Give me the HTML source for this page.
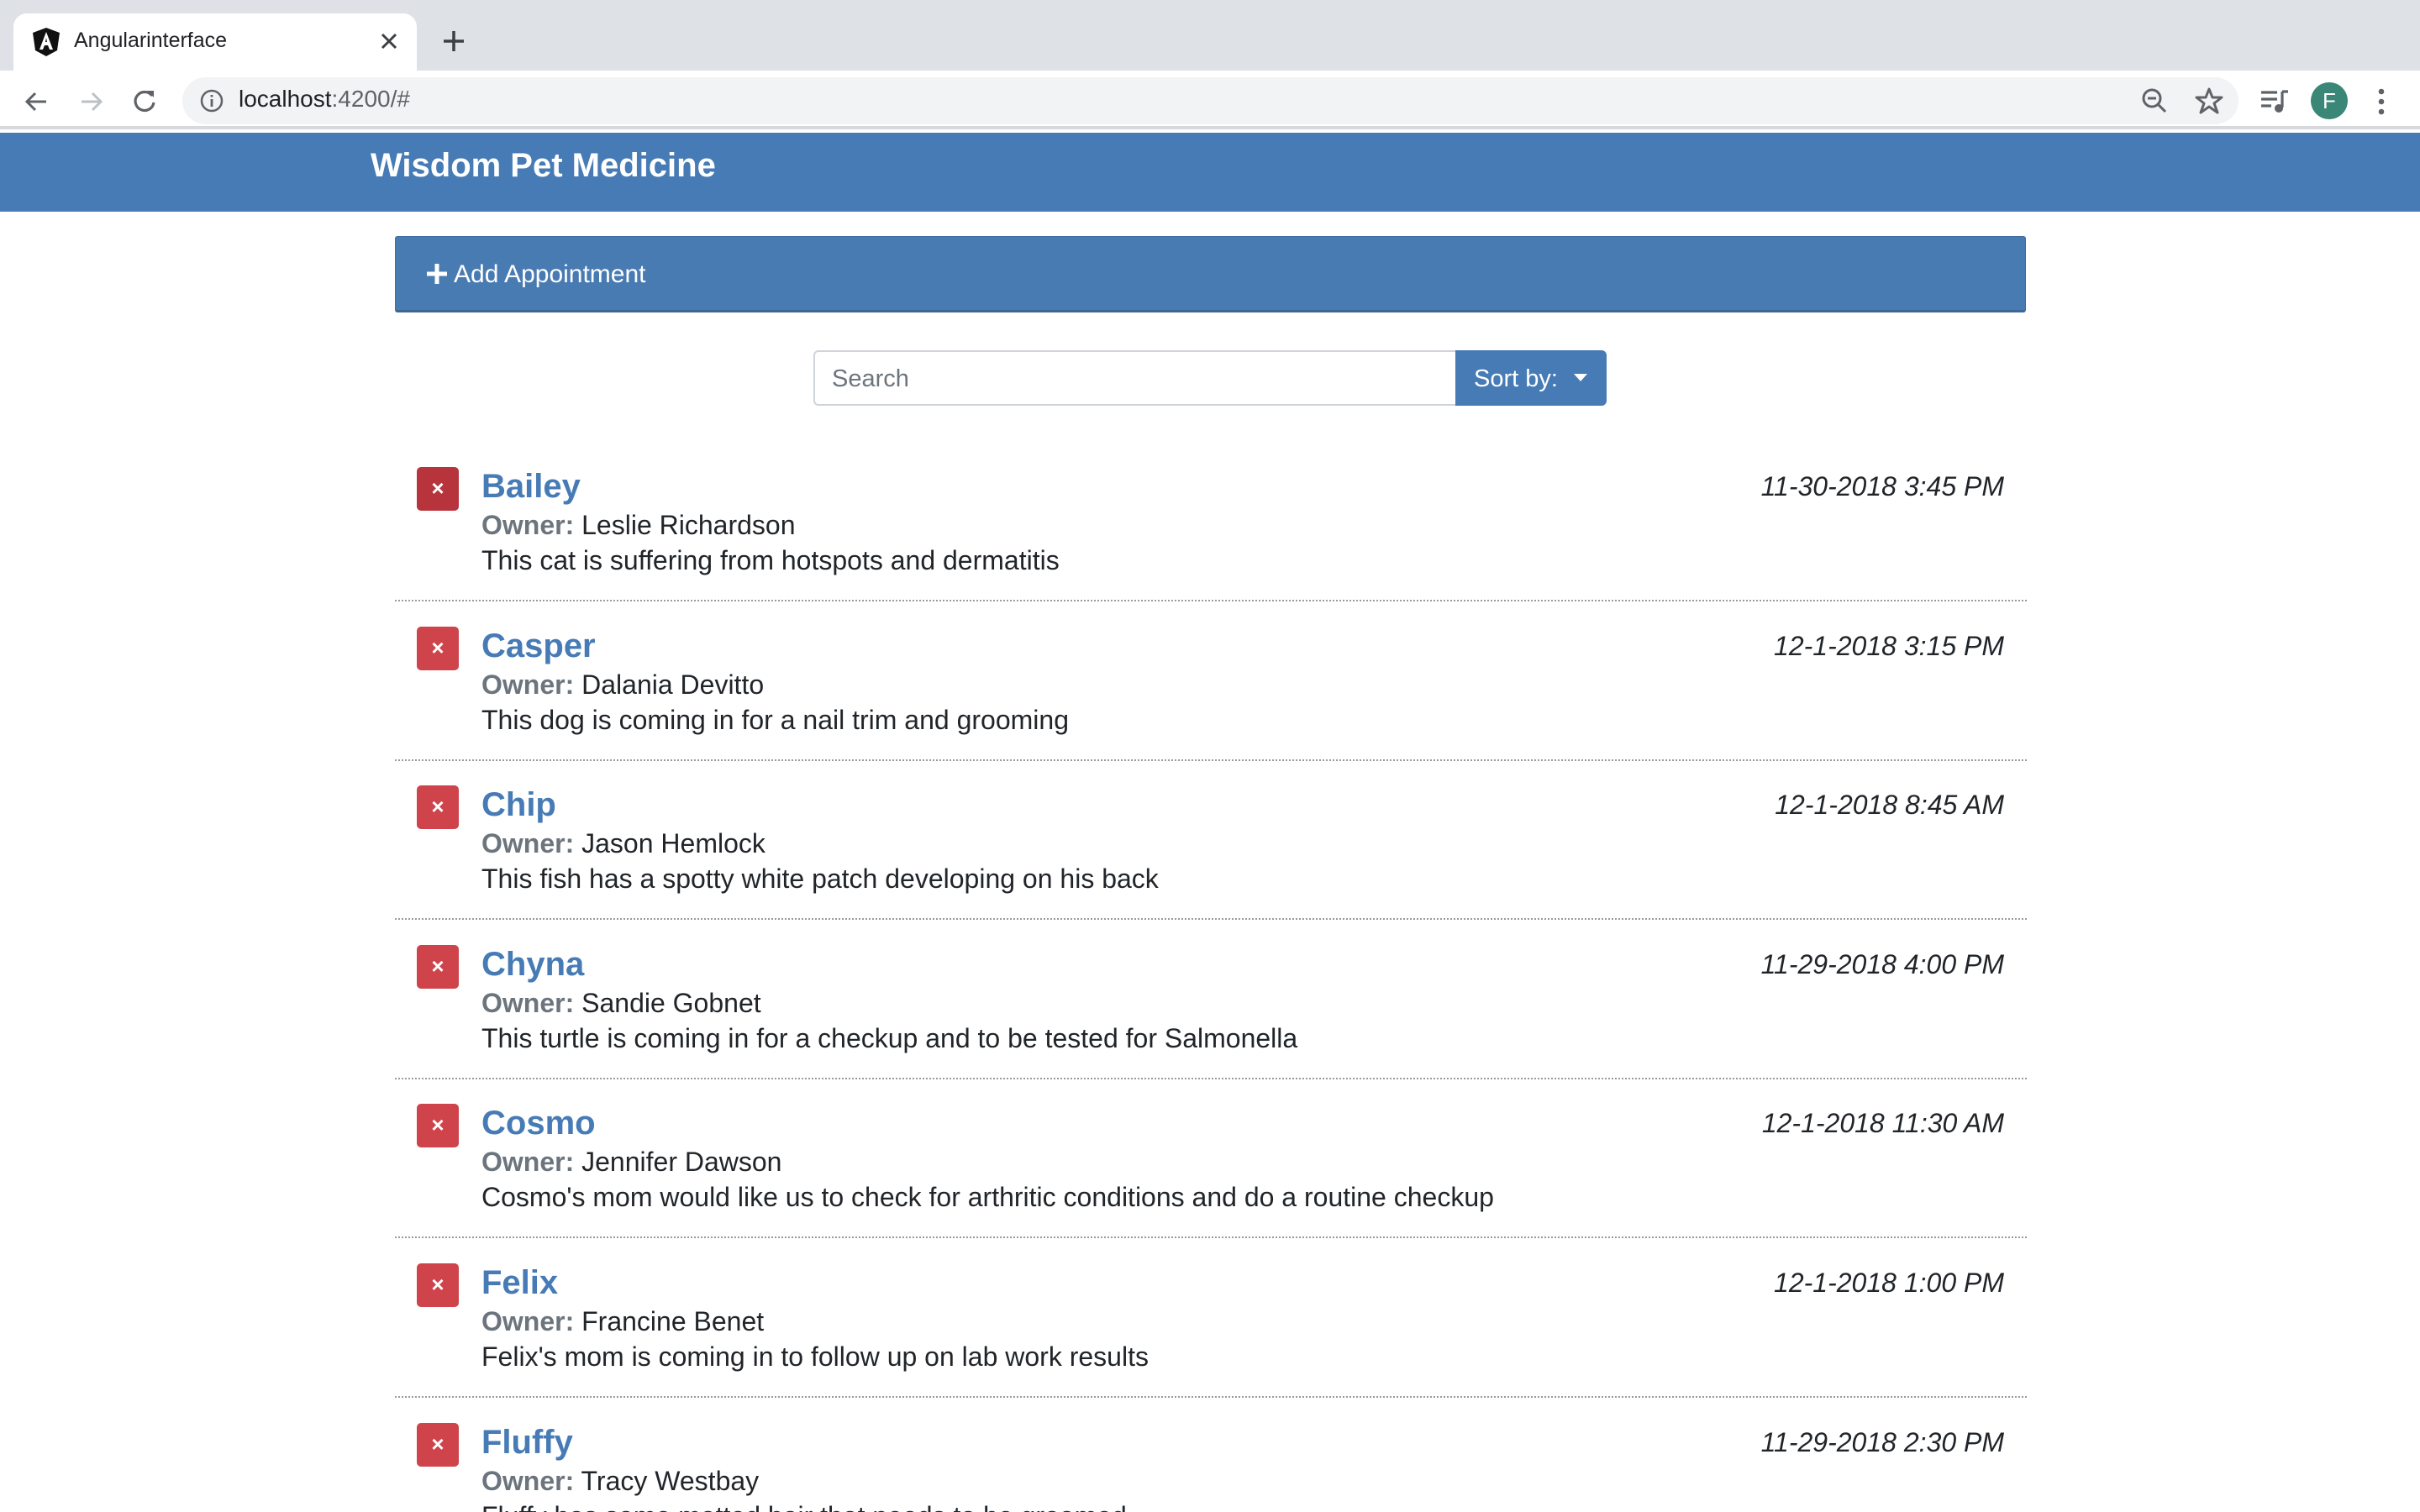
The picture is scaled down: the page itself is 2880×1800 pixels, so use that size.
<!DOCTYPE html>
<html style="width:2880px;height:1800px;overflow:hidden"><head><meta charset="utf-8"><style>
*{margin:0;padding:0;box-sizing:border-box}
body{width:2880px;height:1800px;overflow:hidden;background:#fff;font-family:"Liberation Sans",Arial,sans-serif;position:relative;color:#212529}
.abs{position:absolute}
.tabbar{left:0;top:0;width:2880px;height:84px;background:#dee1e6}
.tab{left:16px;top:16px;width:480px;height:68px;background:#fff;border-radius:16px 16px 0 0}
.toolbar{left:0;top:84px;width:2880px;height:70px;background:#fff;border-bottom:4px solid #d6d8db}
.omni{left:217px;top:92px;width:2447px;height:56px;background:#f1f3f4;border-radius:28px}
.header{left:0;top:158px;width:2880px;height:94px;background:#477bb5}
.item{position:absolute;left:470px;width:1942px;height:190px;border-bottom:2px dotted #9a9a9a}
.del{position:absolute;left:26px;top:30px;width:50px;height:52px;background:#cf434b;border-radius:5px;color:#fff;font-size:26px;font-weight:bold;text-align:center;line-height:50px}
.name{position:absolute;left:103px;top:27px;font-size:40px;line-height:52px;color:#477bb5;font-weight:bold}
.date{position:absolute;right:27px;top:33px;font-size:32px;line-height:40px;font-style:italic;color:#212529}
.own{position:absolute;left:103px;top:78px;font-size:32px;line-height:42px}
.own b{color:#6c757d}
.desc{position:absolute;left:103px;top:120px;font-size:32px;line-height:42px;white-space:nowrap}
</style></head><body>
<div class="abs tabbar"></div>
<div class="abs tab"></div>
<svg class="abs" style="left:38px;top:32px" width="34" height="36" viewBox="0 0 34 36"><path d="M17 1 L33 7 L30 28 L17 35 L4 28 L1 7 Z" fill="#111"/><path d="M17 6 L9 27 H13 L15 22 H19 L21 27 H25 Z M16 18 L17 13 L18 18 Z" fill="#fff"/></svg>
<div class="abs" style="left:88px;top:34px;font-size:25px;color:#202124">Angularinterface</div>
<svg class="abs" style="left:452px;top:38px" width="22" height="22" viewBox="0 0 22 22"><path d="M3 3 L19 19 M19 3 L3 19" stroke="#3c4043" stroke-width="3"/></svg>
<svg class="abs" style="left:526px;top:35px" width="28" height="28" viewBox="0 0 28 28"><path d="M14 2 V26 M2 14 H26" stroke="#3c4043" stroke-width="3.5"/></svg>
<div class="abs toolbar"></div>
<svg class="abs" style="left:28px;top:106px" width="30" height="30" viewBox="0 0 30 30"><path d="M27 15 H5 M14 5 L4 15 L14 25" stroke="#5f6368" stroke-width="3" fill="none"/></svg>
<svg class="abs" style="left:94px;top:106px" width="30" height="30" viewBox="0 0 30 30"><path d="M3 15 H25 M16 5 L26 15 L16 25" stroke="#bdc1c6" stroke-width="3" fill="none"/></svg>
<svg class="abs" style="left:156px;top:104px" width="32" height="32" viewBox="0 0 32 32"><path d="M25 10 A11 11 0 1 0 27 18" stroke="#5f6368" stroke-width="3.2" fill="none"/><path d="M19 4 H27 V12 Z" fill="#5f6368"/></svg>
<div class="abs omni"></div>
<svg class="abs" style="left:237px;top:105px" width="30" height="30" viewBox="0 0 30 30"><circle cx="15" cy="15" r="12" stroke="#5f6368" stroke-width="2.5" fill="none"/><path d="M15 13 V22 M15 8 V10.5" stroke="#5f6368" stroke-width="2.8"/></svg>
<div class="abs" style="left:284px;top:102px;font-size:28px;color:#202124">localhost<span style="color:#5f6368">:4200/#</span></div>
<svg class="abs" style="left:2548px;top:104px" width="32" height="32" viewBox="0 0 32 32"><circle cx="13" cy="13" r="10" stroke="#5f6368" stroke-width="3" fill="none"/><path d="M8 13 H18 M20 20 L29 29" stroke="#5f6368" stroke-width="3"/></svg>
<svg class="abs" style="left:2612px;top:103px" width="34" height="34" viewBox="0 0 34 34"><path d="M17 3 L21 13 L32 13 L23 20 L27 31 L17 24 L7 31 L11 20 L2 13 L13 13 Z" stroke="#5f6368" stroke-width="3" fill="none" stroke-linejoin="round"/></svg>
<svg class="abs" style="left:2690px;top:106px" width="34" height="30" viewBox="0 0 34 30"><path d="M1 4 H20 M1 12 H20 M1 20 H13 M26 3 V22 M26 3 H33" stroke="#5f6368" stroke-width="3.2" fill="none"/><circle cx="22" cy="23" r="5" fill="#5f6368"/></svg>
<div class="abs" style="left:2750px;top:98px;width:44px;height:44px;border-radius:50%;background:#3a8677;color:#fff;font-size:26px;text-align:center;line-height:44px">F</div>
<svg class="abs" style="left:2826px;top:104px" width="16" height="34" viewBox="0 0 16 34"><circle cx="8" cy="5" r="3.3" fill="#5f6368"/><circle cx="8" cy="17" r="3.3" fill="#5f6368"/><circle cx="8" cy="29" r="3.3" fill="#5f6368"/></svg>

<div class="abs header"></div>
<div class="abs" style="left:441px;top:174px;font-size:40px;font-weight:bold;color:#fff;line-height:46px">Wisdom Pet Medicine</div>

<div class="abs" style="left:470px;top:281px;width:1941px;height:91px;background:#497bb3;border:1px solid #3f6c9f;border-bottom:3px solid #3d6795;border-radius:3px"></div>
<svg class="abs" style="left:507px;top:313px" width="26" height="26" viewBox="0 0 26 26"><path d="M13 1 V25 M1 13 H25" stroke="#fff" stroke-width="5"/></svg>
<div class="abs" style="left:540px;top:309px;font-size:30px;color:#fff;line-height:36px">Add Appointment</div>

<div class="abs" style="left:968px;top:417px;width:766px;height:66px;border:2px solid #ced4da;border-radius:6px 0 0 6px"></div>
<div class="abs" style="left:990px;top:434px;font-size:29px;color:#6c757d;line-height:34px">Search</div>
<div class="abs" style="left:1732px;top:417px;width:180px;height:66px;background:#477bb5;border-radius:0 6px 6px 0"></div>
<div class="abs" style="left:1754px;top:434px;font-size:29px;color:#fff;line-height:34px">Sort by:</div>
<svg class="abs" style="left:1873px;top:445px" width="16" height="10" viewBox="0 0 16 10"><path d="M0 0 H16 L8 9 Z" fill="#fff"/></svg>

<div class="item" style="top:526px"><div class="del" style="background:#b8343c">×</div><div class="name">Bailey</div><div class="date">11-30-2018 3:45 PM</div><div class="own"><b>Owner:</b> Leslie Richardson</div><div class="desc">This cat is suffering from hotspots and dermatitis</div></div>
<div class="item" style="top:716px"><div class="del">×</div><div class="name">Casper</div><div class="date">12-1-2018 3:15 PM</div><div class="own"><b>Owner:</b> Dalania Devitto</div><div class="desc">This dog is coming in for a nail trim and grooming</div></div>
<div class="item" style="top:905px"><div class="del">×</div><div class="name">Chip</div><div class="date">12-1-2018 8:45 AM</div><div class="own"><b>Owner:</b> Jason Hemlock</div><div class="desc">This fish has a spotty white patch developing on his back</div></div>
<div class="item" style="top:1095px"><div class="del">×</div><div class="name">Chyna</div><div class="date">11-29-2018 4:00 PM</div><div class="own"><b>Owner:</b> Sandie Gobnet</div><div class="desc">This turtle is coming in for a checkup and to be tested for Salmonella</div></div>
<div class="item" style="top:1284px"><div class="del">×</div><div class="name">Cosmo</div><div class="date">12-1-2018 11:30 AM</div><div class="own"><b>Owner:</b> Jennifer Dawson</div><div class="desc">Cosmo's mom would like us to check for arthritic conditions and do a routine checkup</div></div>
<div class="item" style="top:1474px"><div class="del">×</div><div class="name">Felix</div><div class="date">12-1-2018 1:00 PM</div><div class="own"><b>Owner:</b> Francine Benet</div><div class="desc">Felix's mom is coming in to follow up on lab work results</div></div>
<div class="item" style="top:1664px"><div class="del">×</div><div class="name">Fluffy</div><div class="date">11-29-2018 2:30 PM</div><div class="own"><b>Owner:</b> Tracy Westbay</div><div class="desc">Fluffy has some matted hair that needs to be groomed</div></div>
</body></html>
